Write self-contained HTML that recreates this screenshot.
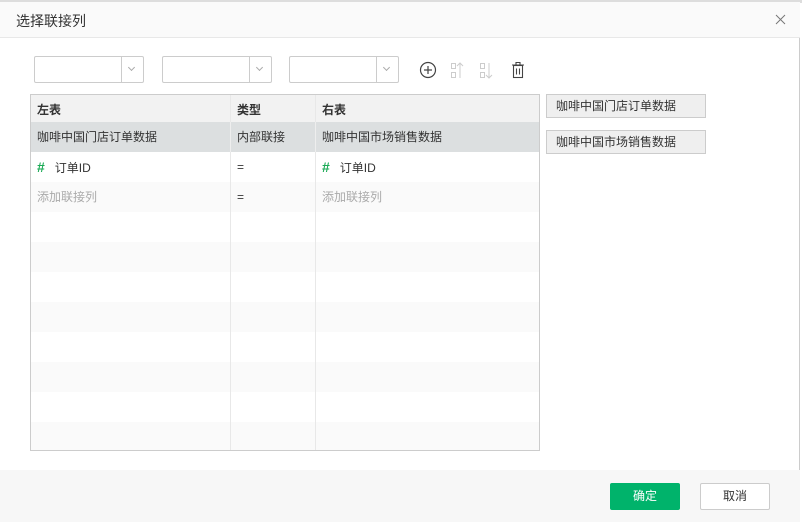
<!DOCTYPE html>
<html><head><meta charset="utf-8"><style>
*{box-sizing:border-box;margin:0;padding:0}
body{width:802px;height:522px;overflow:hidden;background:#fff;font-family:"Liberation Sans","Noto Sans CJK SC",sans-serif;font-size:12px;color:#333;position:relative}
.topstrip{position:absolute;left:0;top:0;width:802px;height:3px;background:#ddd}
.dlg{position:absolute;left:0;top:2px;width:800px;height:520px;background:#fff;border-right:1px solid #ccc}
.title{position:absolute;left:0;top:0;width:800px;height:36px;background:#fafafa;border-bottom:1px solid #e8e8e8}
.title span{position:absolute;left:16px;top:9px;font-size:14px;color:#333}
.sel{position:absolute;top:56px;width:110px;height:27px;border:1px solid #ccc;border-radius:2px;background:#fff}
.sel:after{content:"";position:absolute;left:86px;top:0;width:1px;height:25px;background:#ccc}
.sel i{position:absolute;left:94px;top:8px;width:5px;height:5px;border-right:1px solid #aaa;border-bottom:1px solid #aaa;transform:rotate(45deg)}
.tbl{position:absolute;left:30px;top:94px;width:510px;height:357px;border:1px solid #ccc;overflow:hidden}
.row{position:absolute;left:0;width:510px;height:30px}
.row div{position:absolute;top:0;height:30px;line-height:30px;padding-left:6px}
.c1{left:0;width:200px;border-right:1px solid #e8e8e8}
.c2{left:200px;width:85px;border-right:1px solid #e8e8e8}
.c3{left:285px;width:225px}
.hash{color:#1aaa55;font-weight:bold;font-size:14px;margin-right:10px}
.btnr{position:absolute;left:546px;width:160px;height:24px;border:1px solid #ccc;background:#efefef;line-height:22px;padding-left:9px;font-size:12px}
.foot{position:absolute;left:0;top:470px;width:800px;height:52px;background:#f7f7f7}
.ok{position:absolute;left:610px;top:483px;width:70px;height:27px;background:#00b36b;color:#fff;border-radius:2px;text-align:center;line-height:27px}
.cancel{position:absolute;left:700px;top:483px;width:70px;height:27px;background:#fff;border:1px solid #ccc;border-radius:2px;text-align:center;line-height:25px}
</style></head><body>
<div class="topstrip"></div>
<div class="dlg">
<div class="title"><span>选择联接列</span>
<svg style="position:absolute;left:775px;top:12px" width="11" height="11" viewBox="0 0 11 11"><path d="M1 1l9 9M10 1l-9 9" stroke="#777" stroke-width="1"/></svg></div>
</div>
<div class="sel" style="left:34px"><i></i></div>
<div class="sel" style="left:162px"><i></i></div>
<div class="sel" style="left:289px"><i></i></div>
<svg style="position:absolute;left:418px;top:60px" width="112" height="22" viewBox="0 0 112 22">
<circle cx="10" cy="10" r="7.5" fill="none" stroke="#444" stroke-width="1.2"/>
<path d="M10 6v8M6 10h8" stroke="#444" stroke-width="1.2"/>
<g stroke="#ccc" fill="none" stroke-width="1"><rect x="33.5" y="3.5" width="4" height="5"/><rect x="33.5" y="12.5" width="4" height="5"/><path d="M42 3v15M39 6l3-3 3 3"/>
<rect x="62.5" y="3.5" width="4" height="5"/><rect x="62.5" y="12.5" width="4" height="5"/><path d="M71 3v15M68 15l3 3 3-3"/></g>
<g stroke="#444" fill="none" stroke-width="1.1"><path d="M94 5h12M98 5V2.5h4V5"/><rect x="95.5" y="5.5" width="9" height="12"/><path d="M98.5 8.5v6M101.5 8.5v6"/></g>
</svg>
<div class="tbl">
<div class="row" style="top:0;background:#f2f2f2;font-weight:bold"><div class="c1">左表</div><div class="c2">类型</div><div class="c3">右表</div></div>
<div class="row" style="top:27px;background:#dcdfe0"><div class="c1" style="border-color:#eee">咖啡中国门店订单数据</div><div class="c2" style="border-color:#eee">内部联接</div><div class="c3">咖啡中国市场销售数据</div></div>
<div class="row" style="top:57px;background:#fff"><div class="c1"><span class="hash">#</span>订单ID</div><div class="c2">=</div><div class="c3"><span class="hash">#</span>订单ID</div></div>
<div class="row" style="top:87px;background:#fafafa;color:#aaa"><div class="c1">添加联接列</div><div class="c2" style="color:#333">=</div><div class="c3">添加联接列</div></div>
<div class="row" style="top:117px;background:#fff"><div class="c1"></div><div class="c2"></div></div>
<div class="row" style="top:147px;background:#fafafa"><div class="c1"></div><div class="c2"></div></div>
<div class="row" style="top:177px;background:#fff"><div class="c1"></div><div class="c2"></div></div>
<div class="row" style="top:207px;background:#fafafa"><div class="c1"></div><div class="c2"></div></div>
<div class="row" style="top:237px;background:#fff"><div class="c1"></div><div class="c2"></div></div>
<div class="row" style="top:267px;background:#fafafa"><div class="c1"></div><div class="c2"></div></div>
<div class="row" style="top:297px;background:#fff"><div class="c1"></div><div class="c2"></div></div>
<div class="row" style="top:327px;background:#fafafa"><div class="c1"></div><div class="c2"></div></div>
</div>
<div class="btnr" style="top:94px">咖啡中国门店订单数据</div>
<div class="btnr" style="top:130px">咖啡中国市场销售数据</div>
<div class="foot"></div>
<div class="ok">确定</div>
<div class="cancel">取消</div>
</body></html>
